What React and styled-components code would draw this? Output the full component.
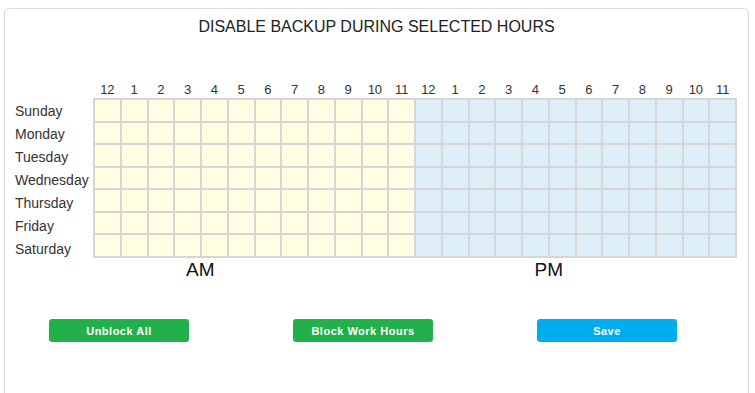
import React from "react";
import styled, { createGlobalStyle } from "styled-components";

const Global = createGlobalStyle`
  html, body { margin: 0; padding: 0; background: #fff; }
  body { font-family: "Liberation Sans", Arial, sans-serif; color: #333; }
`;

const Card = styled.div`
  box-sizing: border-box;
  margin: 8px 0 0 4px;
  width: 745px;
  height: 400px;
  border: 1px solid #dcdcdc;
  border-radius: 5px;
  padding: 8px 0 0 10px;
  background: #fff;
`;

const Title = styled.h1`
  margin: 0 0 45px -10px;
  font-size: 16px;
  font-weight: normal;
  line-height: 20px;
  text-align: center;
  color: #222;
`;

const Schedule = styled.div`
  display: grid;
  grid-template-columns: 78px 644px;
  grid-template-rows: 16px 160px;
`;

const Hours = styled.div`
  display: grid;
  grid-template-columns: repeat(24, 1fr);
  gap: 2px;
  padding: 0 2px;
`;

const Hour = styled.span`
  font-size: 13px;
  line-height: 16px;
  text-align: center;
  color: #333;
`;

const Days = styled.div`
  display: grid;
  grid-template-rows: repeat(7, 23px);
  align-items: center;
  padding-top: 1px;
`;

const Day = styled.span`
  font-size: 14px;
  line-height: 20px;
  color: #333;
  white-space: nowrap;
`;

const Cells = styled.div`
  display: grid;
  grid-template-columns: repeat(24, 1fr);
  grid-template-rows: repeat(7, 1fr);
  gap: 2px;
  padding: 2px;
  background: #d6d6d6;
`;

const Cell = styled.div`
  background: ${(p) => (p.$pm ? "#ddeef8" : "#fffde2")};
`;

const Periods = styled.div`
  display: flex;
  gap: 320px;
  padding-left: 171px;
  margin-top: 1px;
`;

const Period = styled.span`
  font-size: 19px;
  line-height: 22px;
  color: #111;
`;

const Actions = styled.div`
  display: flex;
  gap: 104px;
  padding-left: 34px;
  margin-top: 38px;
`;

const Button = styled.button`
  width: 140px;
  height: 23px;
  border: none;
  border-radius: 3px;
  background: ${(p) => (p.$primary ? "#00aeef" : "#22b04b")};
  color: #fff;
  font-family: "Liberation Sans", Arial, sans-serif;
  font-weight: bold;
  font-size: 11px;
  letter-spacing: 0.5px;
  padding: 0;
  cursor: pointer;
`;

const hours = [12, 1, 2, 3, 4, 5, 6, 7, 8, 9, 10, 11, 12, 1, 2, 3, 4, 5, 6, 7, 8, 9, 10, 11];
const days = ["Sunday", "Monday", "Tuesday", "Wednesday", "Thursday", "Friday", "Saturday"];

export default function App() {
  return (
    <>
      <Global />
      <Card>
        <Title>DISABLE BACKUP DURING SELECTED HOURS</Title>
        <Schedule>
          <div />
          <Hours>
            {hours.map((h, i) => (
              <Hour key={i}>{h}</Hour>
            ))}
          </Hours>
          <Days>
            {days.map((d) => (
              <Day key={d}>{d}</Day>
            ))}
          </Days>
          <Cells>
            {days.map((d) =>
              hours.map((h, i) => <Cell key={d + i} $pm={i >= 12} />)
            )}
          </Cells>
        </Schedule>
        <Periods>
          <Period>AM</Period>
          <Period>PM</Period>
        </Periods>
        <Actions>
          <Button>Unblock All</Button>
          <Button>Block Work Hours</Button>
          <Button $primary>Save</Button>
        </Actions>
      </Card>
    </>
  );
}
